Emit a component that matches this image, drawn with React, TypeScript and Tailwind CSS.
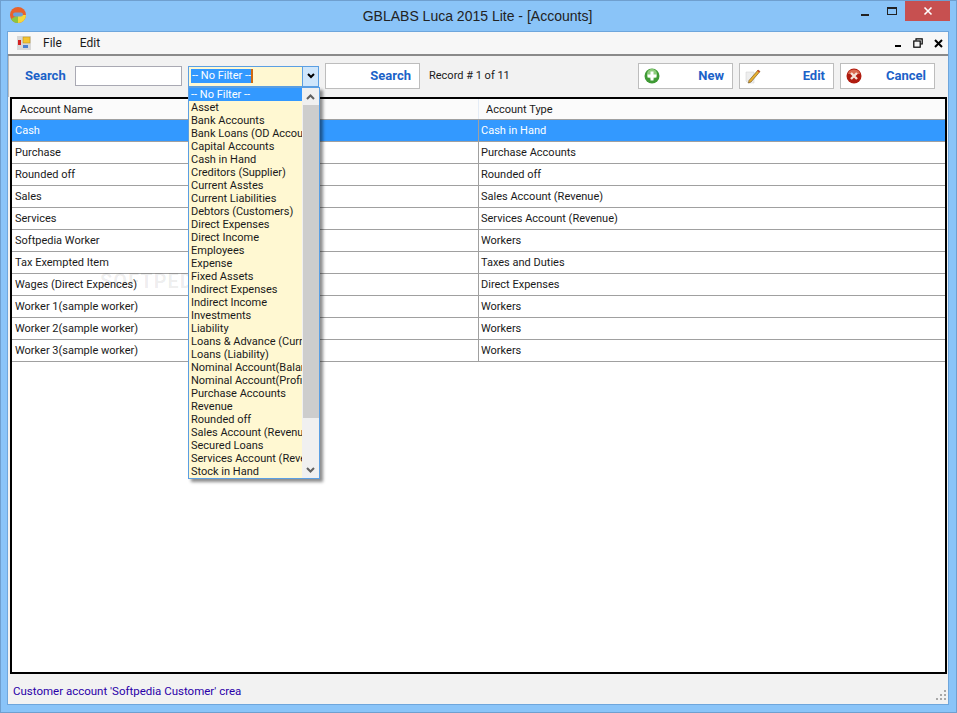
const ROWS = [
  ['Cash', 'Cash in Hand'],
  ['Purchase', 'Purchase Accounts'],
  ['Rounded off', 'Rounded off'],
  ['Sales', 'Sales Account (Revenue)'],
  ['Services', 'Services Account (Revenue)'],
  ['Softpedia Worker', 'Workers'],
  ['Tax Exempted Item', 'Taxes and Duties'],
  ['Wages (Direct Expences)', 'Direct Expenses'],
  ['Worker 1(sample worker)', 'Workers'],
  ['Worker 2(sample worker)', 'Workers'],
  ['Worker 3(sample worker)', 'Workers'],
];

const FILTERS = [
  '-- No Filter --', 'Asset', 'Bank Accounts', 'Bank Loans (OD Account)', 'Capital Accounts', 'Cash in Hand',
  'Creditors (Supplier)', 'Current Asstes', 'Current Liabilities', 'Debtors (Customers)', 'Direct Expenses',
  'Direct Income', 'Employees', 'Expense', 'Fixed Assets', 'Indirect Expenses', 'Indirect Income', 'Investments',
  'Liability', 'Loans & Advance (Current)', 'Loans (Liability)', 'Nominal Account(Balance)', 'Nominal Account(Profit)',
  'Purchase Accounts', 'Revenue', 'Rounded off', 'Sales Account (Revenue)', 'Secured Loans',
  'Services Account (Revenue)', 'Stock in Hand',
];

function AppLogo() {
  return (
    <svg width="16" height="16" viewBox="0 0 16 16">
      <circle cx="8" cy="8" r="8" fill="#e8622a" />
      <path d="M8 8 L16 8 A8 8 0 0 1 8 16 Z" fill="#f3d83c" />
      <path d="M8 8 L8 16 A8 8 0 0 1 1 12 Z" fill="#8cc63f" />
      <rect x="3" y="5.5" width="10" height="4" rx="2" fill="#6f9fd8" />
    </svg>
  );
}

function MdiIcon() {
  return (
    <svg width="14" height="14" viewBox="0 0 14 14">
      <rect x="0" y="0" width="14" height="14" fill="#d8d8d8" />
      <rect x="6" y="1" width="7" height="6" fill="#f4c430" stroke="#b98a10" strokeWidth="0.5" />
      <rect x="1" y="4" width="3" height="5" fill="#d42020" />
      <rect x="6" y="9" width="5" height="3" fill="#4a80d0" />
    </svg>
  );
}

function ToolButton({ label, icon, width }: { label: string; icon?: React.ReactNode; width: string }) {
  return (
    <button type="button" className={`${width} h-[26px] border border-[#bdbdbd] bg-white flex items-center justify-between pl-[5px] pr-[8px] text-[13px] font-bold text-[#1b62c8]`}>
      <span className="flex items-center">{icon}</span>
      <span>{label}</span>
    </button>
  );
}

export default function App() {
  return (
    <div className="relative w-[957px] h-[713px] bg-[#8ac4f8] border border-[#6f9fcf] flex flex-col overflow-hidden text-[11px] text-[#1a1a1a] font-['Roboto',sans-serif]">
      {/* title bar */}
      <div className="h-[30px] shrink-0 flex items-start">
        <div className="ml-[9px] mt-[6px]"><AppLogo /></div>
        <div className="flex-1 text-center text-[14px] leading-[30px] text-[#222] pl-[78px] font-['Liberation_Sans',sans-serif]">GBLABS Luca 2015 Lite - [Accounts]</div>
        <div className="flex items-start mr-[-1px]">
          <div className="w-[28px] h-[20px] flex items-center justify-center"><div className="w-[8px] h-[2px] mt-[8px] bg-[#222]" /></div>
          <div className="w-[26px] h-[20px] flex items-center justify-center"><div className="w-[10px] h-[8px] border border-t-2 border-[#222] -mt-[1px]" /></div>
          <div className="w-[45px] h-[20px] bg-[#c75050] flex items-center justify-center mr-[7px]">
            <svg width="10" height="10" viewBox="0 0 10 10"><path d="M1.5 1.5 L8.5 8.5 M8.5 1.5 L1.5 8.5" stroke="#fff" strokeWidth="1.6" /></svg>
          </div>
        </div>
      </div>

      {/* client */}
      <div className="ml-[6px] mr-[7px] flex-1 mb-[7px] border border-[#6ea6dc] bg-[#f2f2f2] flex flex-col min-h-0">
        {/* menu */}
        <div className="h-[24px] shrink-0 bg-[#f7f7f7] border-b-2 border-[#8a8a8a] flex items-center text-[12px]">
          <div className="ml-[9px] mr-[12px]"><MdiIcon /></div>
          <span className="mr-[18px]">File</span>
          <span>Edit</span>
          <div className="ml-auto flex items-center mr-[5px] text-black">
            <div className="w-[6px] h-[2px] bg-black mt-[6px] mr-[12px]" />
            <svg width="10" height="10" viewBox="0 0 10 10" className="mr-[11px]" fill="none" stroke="#000" strokeWidth="1.2">
              <path d="M3 2.5 V0.8 H9.2 V6 H7.5" />
              <rect x="0.8" y="3" width="6.4" height="6.2" />
            </svg>
            <svg width="9" height="9" viewBox="0 0 9 9"><path d="M1 1 L8 8 M8 1 L1 8" stroke="#000" strokeWidth="2" /></svg>
          </div>
        </div>

        {/* toolbar */}
        <div className="h-[41px] shrink-0 border-l border-[#bcbcbc] flex items-center pb-[1px]">
          <span className="ml-[16px] w-[50px] text-[13px] font-bold text-[#1b62c8]">Search</span>
          <div className="w-[107px] h-[20px] border border-[#a9a9b3] bg-white" />
          <div className="ml-[6px] w-[131px] h-[21px] border border-[#5b9fe3] bg-[#fff8d2] flex">
            <div className="flex-1 p-[2px] pr-[3px] flex items-center">
              <span className="bg-[#3399ff] text-white border-r-2 border-[#d06a10] leading-[14px] pl-[1px]">-- No Filter --</span>
            </div>
            <div className="w-[16px] bg-[#cfe6fb] border-l border-[#5b9fe3] flex items-center justify-center">
              <svg width="8" height="6" viewBox="0 0 8 6"><path d="M1 1 L4 4 L7 1" fill="none" stroke="#000" strokeWidth="2" /></svg>
            </div>
          </div>
          <ToolButton label="Search" width="w-[95px] ml-[6px]" />
          <span className="ml-[9px]">Record # 1 of 11</span>

          <div className="ml-auto flex gap-[6px] mr-[13px]">
            <ToolButton
              label="New"
              width="w-[95px]"
              icon={
                <svg width="16" height="16" viewBox="0 0 16 16">
                  <circle cx="8" cy="8" r="7.5" fill="#3f9a35" />
                  <circle cx="8" cy="6" r="5" fill="#8dcc7c" />
                  <path d="M8 3.5 V12.5 M3.5 8 H12.5" stroke="#fff" strokeWidth="3" />
                </svg>
              }
            />
            <ToolButton
              label="Edit"
              width="w-[95px]"
              icon={
                <svg width="16" height="16" viewBox="0 0 16 16">
                  <path d="M1 4 H9 V15 H3 L1 13 Z" fill="#eeeeee" stroke="#cfcfcf" strokeWidth="0.5" />
                  <path d="M4 12.5 L13 2 L15 3.5 L6 14 L3.5 15 Z" fill="#e8b030" stroke="#6b4a10" strokeWidth="0.6" />
                  <path d="M13 2 L15 3.5 L14.2 4.5 L12.2 3 Z" fill="#c8402a" />
                </svg>
              }
            />
            <ToolButton
              label="Cancel"
              width="w-[95px]"
              icon={
                <svg width="16" height="16" viewBox="0 0 16 16">
                  <circle cx="8" cy="8" r="7.5" fill="#b01c10" />
                  <path d="M8 1.5 A6.5 5 0 0 1 14 6 H2 A6.5 5 0 0 1 8 1.5 Z" fill="#d96a50" />
                  <path d="M5 5 L11 11 M11 5 L5 11" stroke="#f6e3d8" strokeWidth="2.4" />
                </svg>
              }
            />
          </div>
        </div>

        {/* grid */}
        <div className="ml-[2px] mr-[1px] flex-1 min-h-0 border-2 border-black bg-white flex flex-col relative overflow-hidden">
          <div className="h-[21px] shrink-0 flex bg-[#fbfbfb] border-b border-[#a0a0a0]">
            <div className="w-[466px] pl-[8px] leading-[21px]">Account Name</div>
            <div className="flex-1 border-l border-[#e4ecf6] pl-[7px] leading-[21px]">Account Type</div>
          </div>
          {ROWS.map(([name, type], i) => (
            <div key={name} className={`h-[22px] shrink-0 flex border-b border-[#a0a0a0] leading-[21px] ${i === 0 ? 'bg-[#3399ff] text-white' : ''}`}>
              <div className="w-[466px] pl-[3px]">{name}</div>
              <div className="flex-1 border-l border-[#a0a0a0] pl-[2px]">{type}</div>
            </div>
          ))}
          {/* watermark */}
          <div className="absolute left-[88px] top-[167px] text-[20px] font-bold tracking-[1px] text-black/[0.07] pointer-events-none">SOFTPEDIA</div>
        </div>

        {/* status */}
        <div className="h-[30px] shrink-0 flex items-center pl-[5px] pt-[5px] relative text-[11.5px] text-[#2a00a8]">
          Customer account 'Softpedia Customer' crea
          <svg width="12" height="12" viewBox="0 0 12 12" className="absolute right-[1px] bottom-[3px]" fill="#a8a8a8">
            <rect x="9" y="1" width="2" height="2" />
            <rect x="5" y="5" width="2" height="2" />
            <rect x="9" y="5" width="2" height="2" />
            <rect x="1" y="9" width="2" height="2" />
            <rect x="5" y="9" width="2" height="2" />
            <rect x="9" y="9" width="2" height="2" />
          </svg>
        </div>
      </div>

      {/* open combo list */}
      <div className="absolute left-[187px] top-[86px] w-[132px] h-[392px] border border-[#5b9fe3] bg-[#fff8d2] flex shadow-[3px_3px_3px_rgba(0,0,0,0.45)]">
        <div className="flex-1 min-w-0 overflow-hidden">
          {FILTERS.map((f, i) => (
            <div key={f} className={`h-[13px] leading-[13px] pl-[2px] whitespace-nowrap ${i === 0 ? 'bg-[#3399ff] text-white' : ''}`}>{f}</div>
          ))}
        </div>
        <div className="w-[17px] shrink-0 bg-[#f0f0f0] flex flex-col">
          <div className="h-[17px] flex items-center justify-center">
            <svg width="9" height="6" viewBox="0 0 9 6"><path d="M1 5 L4.5 1.5 L8 5" fill="none" stroke="#606060" strokeWidth="2" /></svg>
          </div>
          <div className="h-[313px] mx-[0.5px] bg-[#cdcdcd]" />
          <div className="flex-1 flex items-end justify-center pb-[5px]">
            <svg width="9" height="6" viewBox="0 0 9 6"><path d="M1 1 L4.5 4.5 L8 1" fill="none" stroke="#606060" strokeWidth="2" /></svg>
          </div>
        </div>
      </div>
    </div>
  );
}
